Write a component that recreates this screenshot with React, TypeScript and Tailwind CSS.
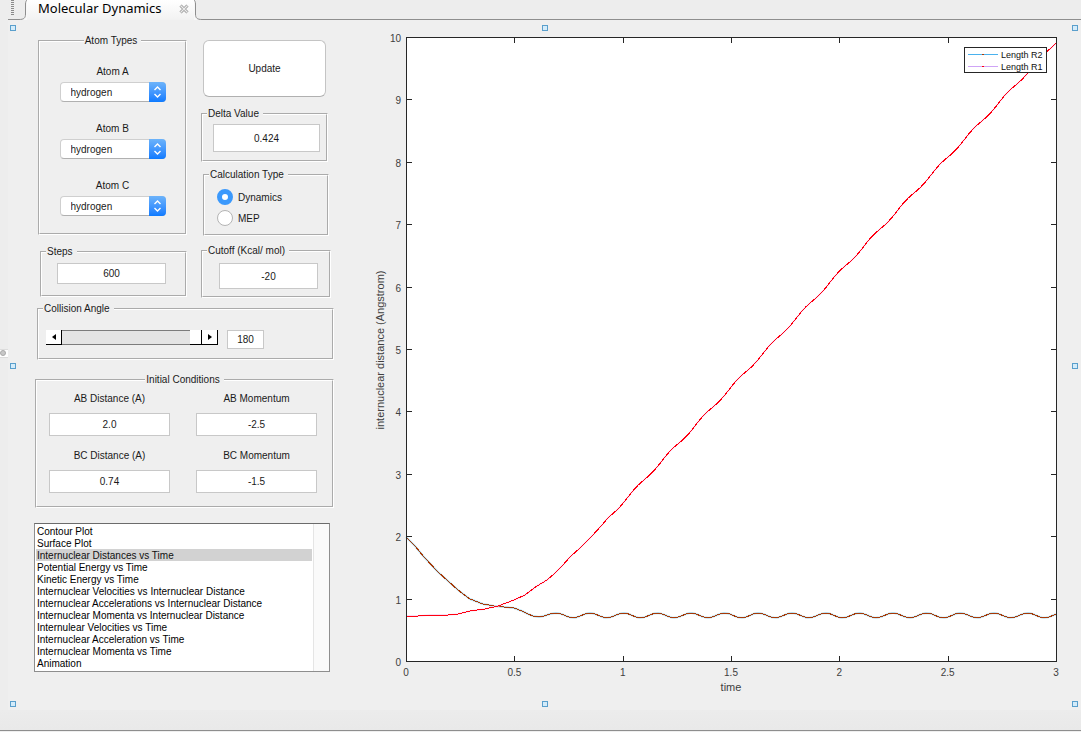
import React, { useState } from 'react';

const atoms = ['A', 'B', 'C'];

const plots = [
    'Contour Plot',
    'Surface Plot',
    'Internuclear Distances vs Time',
    'Potential Energy vs Time',
    'Kinetic Energy vs Time',
    'Internuclear Velocities vs Internuclear Distance',
    'Internuclear Accelerations vs Internuclear Distance',
    'Internuclear Momenta vs Internuclear Distance',
    'Internulear Velocities vs Time',
    'Internuclear Acceleration vs Time',
    'Internuclear Momenta vs Time',
    'Animation',
];

const conditions = [
    { label: 'AB Distance (A)', value: '2.0' },
    { label: 'AB Momentum', value: '-2.5' },
    { label: 'BC Distance (A)', value: '0.74' },
    { label: 'BC Momentum', value: '-1.5' },
];

const handles = [
    'left-[2px] top-[5px]',
    'left-1/2 -ml-[3px] top-[5px]',
    'right-[3px] top-[5px]',
    'left-[2px] top-1/2 -mt-[2px]',
    'right-[3px] top-1/2 -mt-[2px]',
    'left-[2px] bottom-[3px]',
    'left-1/2 -ml-[3px] bottom-[3px]',
    'right-[3px] bottom-[3px]',
];

// plot area inside the svg
const X0 = 36;
const Y0 = 642;
const W = 650;
const H = 624;
const PERIOD = 33.67;

const startR2 = [
    [36, 517], [45, 526], [54, 537], [68, 552], [78, 561], [88, 570], [100, 579], [113, 584],
    [124, 586], [144, 588], [152, 591], [158, 594], [163, 596], [169, 597], [174, 596], [180, 594],
];
const startR1 = [
    [36, 596], [48, 596], [60, 595], [78, 595], [88, 594], [100, 591], [115, 589], [128, 586],
    [144, 580], [155, 575], [167, 566], [177, 560], [184, 554], [192, 546], [200, 537], [210, 528], [221, 517], [232, 505],
];

const path = (start: number[][], from: number, fn: (x: number) => number) => {
    const pts = start.map(([x, y]) => x + ',' + y);
    for (let x = from; x <= X0 + W; x += 2) {
        pts.push(x + ',' + fn(x).toFixed(1));
    }
    return pts.join(' ');
};

const r2 = path(startR2, 184, (x) => 595.4 - 2.3 * Math.cos((2 * Math.PI * (x - 220)) / PERIOD));
const r1 = path(startR1, 238, (x) => 459 - 1.063 * (x - 275) + 1.2 * Math.sin((2 * Math.PI * (x - 241)) / PERIOD));

const Group = ({ title, center, className, children }: { title: string; center?: boolean; className: string; children: React.ReactNode }) => (
    <fieldset className={'min-w-0 border-2 border-white [border-style:groove] ' + className}>
        <legend className={'pl-px pr-1 leading-3 ' + (center ? 'mx-auto' : 'ml-1')}>{title}</legend>
        {children}
    </fieldset>
);

const Field = ({ label, value, className }: { label: string; value: string; className: string }) => (
    <input
        type="text"
        aria-label={label}
        defaultValue={value}
        className={'block border border-[#c8c8c8] bg-white text-center outline-none ' + className}
    />
);

const Header = () => (
    <header className="flex h-5 bg-[#ededed] pl-2">
        <div className="w-[11px] border-b border-[#8e8e8e] pl-[3px]">
            <div className="h-4 w-[3px] bg-[repeating-linear-gradient(#8a8a8a_0_1px,transparent_1px_2px)]"></div>
        </div>
        <svg className="h-5 w-2" viewBox="0 0 8 20">
            <path d="M0 19.5C5 19.5 6.5 18 6.5 14V4C6.5 2 7 1 8 0V20H0Z" fill="#f8f8f8" />
            <path d="M0 19.5C5 19.5 6.5 18 6.5 14V4C6.5 2 7 1 8 0" fill="none" stroke="#8e8e8e" />
        </svg>
        <div className="flex w-[162px] items-start bg-gradient-to-b from-white to-[#f2f2f2] pl-[11px]">
            <h1 className="font-['Noto_Sans'] text-[13px] leading-[17px] text-black">Molecular Dynamics</h1>
            <button aria-label="Close" className="ml-auto mt-1">
                <svg width="10" height="10" viewBox="0 0 10 10">
                    <path d="M1.5 1.5L8.5 8.5M8.5 1.5L1.5 8.5" stroke="#9a9a9a" strokeWidth="3" />
                    <path d="M1.5 1.5L8.5 8.5M8.5 1.5L1.5 8.5" stroke="#ececec" strokeWidth="1.2" />
                </svg>
            </button>
        </div>
        <div className="w-[5px] bg-gradient-to-b from-white to-[#f2f2f2]"></div>
        <svg className="h-5 w-2" viewBox="0 0 8 20">
            <path d="M8 19.5C3 19.5 1.5 18 1.5 14V4C1.5 2 1 1 0 0V20H8Z" fill="#f8f8f8" />
            <path d="M8 19.5C3 19.5 1.5 18 1.5 14V4C1.5 2 1 1 0 0" fill="none" stroke="#8e8e8e" />
        </svg>
        <div className="flex-1 border-b border-[#8e8e8e]"></div>
    </header>
);

const AtomTypes = () => (
    <Group title="Atom Types" center className="ml-1 h-[200px] w-[149px]">
        <div className="flex flex-col items-center gap-5 pt-[18px]">
            {atoms.map((a) => (
                <div key={a} className="flex flex-col items-center gap-[3px]">
                    <label htmlFor={'atom' + a} className="leading-[14px]">Atom {a}</label>
                    <div className="relative">
                        <select
                            id={'atom' + a}
                            className="block h-5 w-[106px] appearance-none rounded border border-[#cfcfcf] border-b-[#b0b0b0] bg-white pl-2.5 outline-none"
                        >
                            <option>hydrogen</option>
                        </select>
                        <svg className="pointer-events-none absolute right-0 top-0 h-5 w-[17px] rounded-r bg-gradient-to-b from-[#6cb3fa] to-[#0a7aff]" viewBox="0 0 17 20">
                            <path d="M5.5 8L8.5 5L11.5 8M5.5 12L8.5 15L11.5 12" fill="none" stroke="#fff" strokeWidth="1.4" />
                        </svg>
                    </div>
                </div>
            ))}
        </div>
    </Group>
);

const CalculationType = () => (
    <Group title="Calculation Type" className="ml-0.5 mt-[7px] h-[67px] w-[126px]">
        <div className="flex flex-col gap-[5px] pl-3 pt-2">
            {['Dynamics', 'MEP'].map((t) => (
                <label key={t} className="flex items-center gap-[5px]">
                    <input
                        type="radio"
                        name="calc"
                        defaultChecked={t === 'Dynamics'}
                        className="size-4 appearance-none rounded-full border border-[#b4b4b4] bg-white checked:border-[5px] checked:border-[#3b99fc]"
                    />
                    {t}
                </label>
            ))}
        </div>
    </Group>
);

const CollisionAngle = () => {
    const [angle, setAngle] = useState(180);
    const arrow = 'flex h-[15px] w-4 items-center justify-center border-b border-r border-black bg-white';

    return (
        <Group title="Collision Angle" className="ml-[3px] mt-[5px] h-[57px] w-[297px]">
            <div className="flex items-start gap-[9px] pl-[7px] pt-[15px]">
                <div className="flex">
                    <button aria-label="Decrease" className={arrow} onClick={() => setAngle(Math.max(0, angle - 1))}>
                        <svg width="4" height="6" viewBox="0 0 4 6"><path d="M4 0V6L0 3Z" /></svg>
                    </button>
                    <input
                        type="range"
                        aria-label="Collision Angle"
                        min={0}
                        max={180}
                        value={angle}
                        onChange={(e) => setAngle(Number(e.target.value))}
                        className="h-[15px] w-[140px] appearance-none border-y border-[#7c7c7c] bg-[#e4e4e4] outline-none [&::-webkit-slider-thumb]:h-[15px] [&::-webkit-slider-thumb]:w-3 [&::-webkit-slider-thumb]:appearance-none [&::-webkit-slider-thumb]:border-b [&::-webkit-slider-thumb]:border-r [&::-webkit-slider-thumb]:border-black [&::-webkit-slider-thumb]:bg-white"
                    />
                    <button aria-label="Increase" className={arrow} onClick={() => setAngle(Math.min(180, angle + 1))}>
                        <svg width="4" height="6" viewBox="0 0 4 6"><path d="M0 0V6L4 3Z" /></svg>
                    </button>
                </div>
                <input
                    type="text"
                    aria-label="Angle value"
                    value={angle}
                    onChange={(e) => setAngle(Number(e.target.value) || 0)}
                    className="block h-[19px] w-[37px] border border-[#c8c8c8] bg-white text-center outline-none"
                />
            </div>
        </Group>
    );
};

const InitialConditions = () => (
    <Group title="Initial Conditions" center className="ml-px mt-[14px] h-[134px] w-[299px]">
        <div className="grid grid-cols-[121px_121px] gap-x-[26px] gap-y-[13px] pl-3 pt-1.5">
            {conditions.map((c) => (
                <label key={c.label} className="block text-center leading-[14px]">
                    {c.label}
                    <Field label={c.label} value={c.value} className="mt-[7px] h-[23px] w-full" />
                </label>
            ))}
        </div>
    </Group>
);

const PlotList = () => (
    <div className="mt-[15px] flex h-[149px] w-[296px] border border-[#8e8e8e] border-t-[#6b6b6b] bg-white">
        <select
            size={12}
            aria-label="Plot"
            defaultValue={plots[2]}
            className="flex-1 overflow-hidden bg-white bg-none p-px text-black outline-none"
        >
            {plots.map((p) => (
                <option key={p} className="h-3 min-h-0 bg-none px-px pb-0 pt-px leading-3 checked:bg-[#d2d2d2]">{p}</option>
            ))}
        </select>
        <div className="w-4 border-l border-[#e5e5e5] bg-[#fafafa]"></div>
    </div>
);

const Chart = () => {
    const xs = [0, 0.5, 1, 1.5, 2, 2.5, 3];
    const ys = [0, 1, 2, 3, 4, 5, 6, 7, 8, 9, 10];

    return (
        <svg className="w-full" viewBox="0 0 695 680" fontSize="10" fill="#404040">
            <rect x={X0} y={Y0 - H} width={W} height={H} fill="#fff" />
            <g fill="none">
                <polyline points={r2} stroke="#b4dcec" strokeWidth="2" />
                <polyline points={r2} stroke="#a83a08" strokeWidth="1" shapeRendering="crispEdges" />
                <polyline points={r1} stroke="#f6d4f0" strokeWidth="1.6" />
                <polyline points={r1} stroke="#ff0010" strokeWidth="1" shapeRendering="crispEdges" />
            </g>
            <g stroke="#262626" fill="none" shapeRendering="crispEdges">
                <rect x={X0 + 0.5} y={Y0 - H - 0.5} width={W} height={H} />
                {xs.map((v) => {
                    const x = X0 + 0.5 + (v * W) / 3;
                    return <path key={v} d={`M${x} ${Y0}v-6M${x} ${Y0 - H}v5`} />;
                })}
                {ys.map((v) => {
                    const y = Y0 - 0.5 - (v * H) / 10;
                    return <path key={v} d={`M${X0} ${y}h6M${X0 + W} ${y}h-5`} />;
                })}
            </g>
            {xs.map((v) => (
                <text key={v} x={X0 + (v * W) / 3} y={Y0 + 14} textAnchor="middle">{v}</text>
            ))}
            {ys.map((v) => (
                <text key={v} x={X0 - 5} y={Y0 + 4 - (v * H) / 10} textAnchor="end">{v}</text>
            ))}
            <text x="361" y="671" fontSize="11" textAnchor="middle">time</text>
            <text transform="translate(14 330) rotate(-90)" fontSize="11" textAnchor="middle">internuclear distance (Angstrom)</text>

            <rect x="594.5" y="27.5" width="82" height="25" fill="#fff" stroke="#262626" shapeRendering="crispEdges" />
            <path d="M598 34.5h30" stroke="#4ab2ee" />
            <path d="M598 46.5h30" stroke="#cfa4f6" />
            <path d="M612 34.5h2" stroke="#a83a08" />
            <path d="M612 46.5h2" stroke="#ff0010" />
            <g fontSize="9" fill="#111">
                <text x="631" y="38">Length R2</text>
                <text x="631" y="50">Length R1</text>
            </g>
        </svg>
    );
};

const App = () => {
    return (
        <div className="flex min-h-screen flex-col bg-[#efefef] font-['Liberation_Sans',sans-serif] text-[10px] text-[#1a1a1a]">
            <Header />
            <main className="flex flex-1">
                <div className="flex w-2 items-center bg-[#ededed]">
                    <div className="mb-6 flex h-[9px] w-2 items-center border-y border-[#dcdcdc] bg-white">
                        <div className="size-1.5 rounded-full border border-[#aaaaaa] bg-[#c8c8c8]"></div>
                    </div>
                </div>
                <div className="relative flex flex-1 items-start pl-[26px] pr-4">
                    <div className="w-[300px] shrink-0 pt-[15px]">
                        <div className="flex gap-[14px]">
                            <div>
                                <AtomTypes />
                                <Group title="Steps" className="ml-1.5 mt-[11px] h-[51px] w-[147px]">
                                    <Field label="Steps" value="600" className="ml-[15px] mt-[5px] h-[21px] w-[109px]" />
                                </Group>
                            </div>
                            <div>
                                <button className="ml-0.5 mt-[5px] block h-[57px] w-[123px] rounded-md border border-[#c4c4c4] border-b-[#b0b0b0] bg-white">
                                    Update
                                </button>
                                <Group title="Delta Value" className="mt-[11px] h-[54px] w-[127px]">
                                    <Field label="Delta Value" value="0.424" className="ml-2.5 mt-1 h-7 w-[107px]" />
                                </Group>
                                <CalculationType />
                                <Group title="Cutoff (Kcal/ mol)" className="mt-[9px] h-[53px] w-[130px]">
                                    <Field label="Cutoff" value="-20" className="ml-4 mt-1.5 h-[26px] w-[99px]" />
                                </Group>
                            </div>
                        </div>
                        <CollisionAngle />
                        <InitialConditions />
                        <PlotList />
                    </div>
                    <div className="ml-9 min-w-0 flex-1">
                        <Chart />
                    </div>
                    {handles.map((pos) => (
                        <span key={pos} className={'absolute size-[6px] border border-[#5a9fcc] bg-[#d4ecfa] ' + pos}></span>
                    ))}
                </div>
            </main>
            <footer className="pb-px">
                <div className="h-[21px] border-b border-[#8e8e8e] bg-gradient-to-b from-[#ececec] to-[#e9e9e9]"></div>
            </footer>
        </div>
    );
};

export default App;
